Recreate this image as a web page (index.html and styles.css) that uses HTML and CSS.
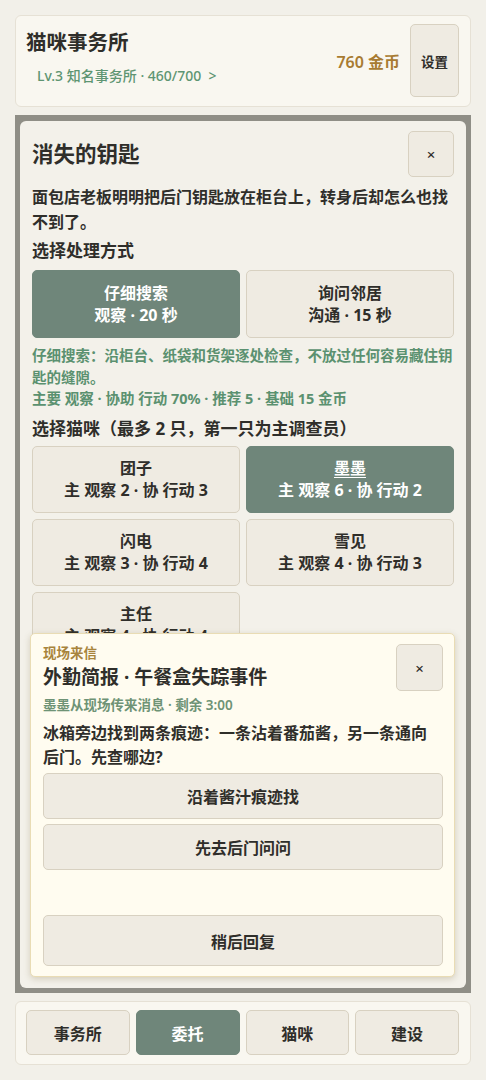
FILE: index.html
```html
<!DOCTYPE html>
<html lang="zh-CN">
<head>
    <meta charset="UTF-8">
    <meta name="viewport" content="width=device-width, initial-scale=1.0">
    <title>猫咪事务所</title>
    <link rel="stylesheet" href="styles.css">
</head>
<body>

    <div class="app">
        <header class="topbar">
            <div class="brand">
                <h1>猫咪事务所</h1>
                <button class="level">Lv.3 知名事务所 · 460/700 &nbsp;&gt;</button>
            </div>
            <div class="coins">760 金币</div>
            <button class="btn settings">设置</button>
        </header>

        <main class="stage">
            <div class="modal">
                <div class="modal-head">
                    <h2>消失的钥匙</h2>
                    <button class="btn close">×</button>
                </div>
                <p class="desc">面包店老板明明把后门钥匙放在柜台上，转身后却怎么也找不到了。</p>

                <h3>选择处理方式</h3>
                <div class="grid">
                    <button class="btn choice active">仔细搜索<br>观察 · 20 秒</button>
                    <button class="btn choice">询问邻居<br>沟通 · 15 秒</button>
                </div>
                <p class="hint">仔细搜索：沿柜台、纸袋和货架逐处检查，不放过任何容易藏住钥匙的缝隙。<br>主要 观察 · 协助 行动 70% · 推荐 5 · 基础 15 金币</p>

                <h3>选择猫咪（最多 2 只，第一只为主调查员）</h3>
                <div class="grid cats">
                    <button class="btn choice">团子<br>主 观察 2 · 协 行动 3</button>
                    <button class="btn choice active"><u>墨墨</u><br>主 观察 6 · 协 行动 2</button>
                    <button class="btn choice">闪电<br>主 观察 3 · 协 行动 4</button>
                    <button class="btn choice">雪见<br>主 观察 4 · 协 行动 3</button>
                    <button class="btn choice">主任<br>主 观察 4 · 协 行动 4</button>
                </div>

                <div class="letter">
                    <div class="letter-head">
                        <div>
                            <div class="tag">现场来信</div>
                            <h4>外勤简报 · 午餐盒失踪事件</h4>
                        </div>
                        <button class="btn close">×</button>
                    </div>
                    <div class="from">墨墨从现场传来消息 · 剩余 3:00</div>
                    <p class="msg">冰箱旁边找到两条痕迹：一条沾着番茄酱，另一条通向后门。先查哪边?</p>
                    <div class="options">
                        <button class="btn option">沿着酱汁痕迹找</button>
                        <button class="btn option">先去后门问问</button>
                    </div>
                    <button class="btn option later">稍后回复</button>
                </div>
            </div>
        </main>

        <nav class="tabs">
            <button class="btn tab">事务所</button>
            <button class="btn tab active">委托</button>
            <button class="btn tab">猫咪</button>
            <button class="btn tab">建设</button>
        </nav>
    </div>

</body>
</html>
```

FILE: styles.css
```css
* {
    box-sizing: border-box;
}
body {
    margin: 0;
    background-color: #f2f0e9;
    font-family: "Noto Sans", "Noto Sans CJK SC", sans-serif;
    color: #2f2e2a;
}
.app {
    width: 456px;
    height: 1080px;
    margin-left: 15px;
    padding: 15px 0;
    display: flex;
    flex-direction: column;
    gap: 8px;
}
h1, h2, h3, h4, p {
    margin: 0;
}
.btn {
    font-family: inherit;
    font-weight: 700;
    font-size: 16px;
    color: #2f2e2a;
    background-color: #efebe2;
    border: 1px solid #d8d1c1;
    border-radius: 5px;
    padding: 0;
    cursor: pointer;
}
.btn.active {
    background-color: #6f867a;
    border-color: #6f867a;
    color: #fff;
}

/* top bar */
.topbar {
    height: 92px;
    background-color: #f9f7f0;
    border: 1px solid #e6e1d5;
    border-radius: 6px;
    padding: 8px 11px 9px 10px;
    display: flex;
    align-items: center;
}
.brand {
    flex: 1;
    align-self: stretch;
    padding-top: 4px;
}
.brand h1 {
    font-size: 20.5px;
    line-height: 28px;
}
.level {
    margin-top: 9px;
    margin-left: 11px;
    background: none;
    border: none;
    padding: 0;
    font-family: inherit;
    font-size: 14px;
    font-weight: 500;
    color: #5e9572;
}
.coins {
    color: #a87b32;
    font-size: 16px;
    font-weight: 600;
    margin-right: 10px;
}
.settings {
    width: 49px;
    height: 73px;
    font-size: 13.5px;
}

/* task modal */
.stage {
    flex: 1;
    background-color: #8f8e86;
    padding: 6px 5px 5px;
    display: flex;
}
.modal {
    position: relative;
    flex: 1;
    background-color: #f3f1ea;
    border-radius: 6px;
    padding: 10px 12px;
    display: flex;
    flex-direction: column;
}
.modal-head {
    display: flex;
    align-items: center;
    justify-content: space-between;
}
.modal-head h2 {
    font-size: 21.5px;
    margin-top: -3px;
}
.close {
    width: 46px;
    height: 46px;
    font-size: 15px;
    font-weight: 500;
}
.desc {
    margin-top: 8px;
    font-size: 16px;
    font-weight: 700;
    line-height: 25px;
}
h3 {
    margin-top: 4px;
    font-size: 17px;
    line-height: 24px;
}
.grid {
    margin-top: 7px;
    display: grid;
    grid-template-columns: 1fr 1fr;
    gap: 6px;
}
.choice {
    height: 68px;
    line-height: 22.5px;
}
.grid.cats {
    margin-top: 5px;
}
.cats .choice {
    height: 67px;
}
.cats u {
    text-underline-offset: 3px;
}
.hint {
    margin-top: 7px;
    color: #5b9170;
    font-size: 14.5px;
    font-weight: 700;
    line-height: 21.5px;
}
.hint + h3 {
    margin-top: 7px;
}

/* field letter popup */
.letter {
    position: absolute;
    left: 10px;
    right: 11px;
    top: 512px;
    bottom: 11px;
    background-color: #fffcf0;
    border: 1px solid #e9dcb4;
    border-radius: 5px;
    box-shadow: 0 2px 6px rgba(120, 100, 50, 0.25);
    padding: 10px 11px 10px 12px;
    display: flex;
    flex-direction: column;
}
.letter-head {
    display: flex;
    justify-content: space-between;
    align-items: flex-start;
}
.tag {
    color: #a8843c;
    font-size: 13.5px;
    font-weight: 700;
    line-height: 18px;
}
.letter-head h4 {
    font-size: 19px;
    line-height: 28px;
    margin-top: 1px;
}
.letter .close {
    width: 47px;
    height: 47px;
}
.from {
    margin-top: 4px;
    color: #6e9375;
    font-size: 13.5px;
    font-weight: 600;
    line-height: 20px;
}
.msg {
    margin-top: 6px;
    padding-right: 3px;
    font-size: 16px;
    font-weight: 700;
    line-height: 24px;
}
.options {
    margin-top: 4px;
    display: flex;
    flex-direction: column;
    gap: 5px;
}
.option {
    height: 46px;
    width: 100%;
}
.later {
    margin-top: auto;
    height: 51px;
}

/* bottom tabs */
.tabs {
    height: 64px;
    background-color: #f9f7f0;
    border: 1px solid #e6e1d5;
    border-radius: 6px;
    padding: 8px 11px 9px 10px;
    display: grid;
    grid-template-columns: repeat(4, 1fr);
    gap: 6px;
}
```
